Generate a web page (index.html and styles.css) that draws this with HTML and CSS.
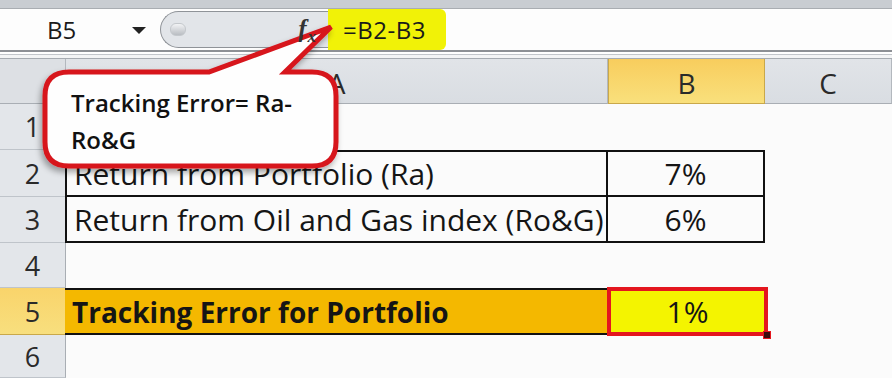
FILE: index.html
```html
<!DOCTYPE html>
<html lang="en">
<head>
    <meta charset="UTF-8">
    <title>Tracking Error - Excel</title>
    <link rel="stylesheet" href="styles.css">
</head>
<body>
    <div class="window">
        <div class="top-strip"></div>

        <div class="formula-bar">
            <div class="name-box">
                <span class="name-text">B5</span>
                <span class="drop-arrow"></span>
            </div>
            <div class="pill">
                <span class="pill-knob"></span>
                <span class="fx">f<span class="fx-x">x</span></span>
            </div>
            <div class="formula">=B2-B3</div>
            <div class="formula-rest"></div>
        </div>

        <div class="bar-gap"></div>

        <div class="sheet">
            <div class="corner"><span class="corner-tri"></span></div>
            <div class="col-head">A</div>
            <div class="col-head col-active">B</div>
            <div class="col-head">C</div>

            <div class="row-head">1</div>
            <div class="cell"></div>
            <div class="cell"></div>
            <div class="cell"></div>

            <div class="row-head">2</div>
            <div class="cell boxed boxed-left boxed-top">Return from Portfolio (Ra)</div>
            <div class="cell boxed boxed-top num">7%</div>
            <div class="cell"></div>

            <div class="row-head">3</div>
            <div class="cell boxed boxed-left">Return from Oil and Gas index (Ro&amp;G)</div>
            <div class="cell boxed num">6%</div>
            <div class="cell"></div>

            <div class="row-head">4</div>
            <div class="cell"></div>
            <div class="cell"></div>
            <div class="cell"></div>

            <div class="row-head row-active">5</div>
            <div class="cell result-label">Tracking Error for Portfolio</div>
            <div class="cell result-value num">1%<span class="fill-handle"></span></div>
            <div class="cell"></div>

            <div class="row-head">6</div>
            <div class="cell"></div>
            <div class="cell"></div>
            <div class="cell"></div>
        </div>

        <!-- callout over the sheet -->
        <svg class="callout-shape" width="892" height="378" viewBox="0 0 892 378">
            <defs>
                <filter id="shadow" x="-10%" y="-10%" width="130%" height="140%">
                    <feGaussianBlur in="SourceAlpha" stdDeviation="3"/>
                    <feOffset dx="-2" dy="4"/>
                    <feComponentTransfer><feFuncA type="linear" slope="0.35"/></feComponentTransfer>
                    <feMerge><feMergeNode/><feMergeNode in="SourceGraphic"/></feMerge>
                </filter>
            </defs>
            <path d="M69 72 L209 72 L331 27 L285 72 L312 72 Q336 72 336 96 L336 142 Q336 166 312 166 L69 166 Q45 166 45 142 L45 96 Q45 72 69 72 Z"
                  fill="#fefefe" stroke="#d7141d" stroke-width="5" stroke-linejoin="miter" filter="url(#shadow)"/>
        </svg>
        <div class="callout-text">Tracking Error= Ra-<br>Ro&amp;G</div>
    </div>
</body>
</html>
```

FILE: styles.css
```css
body {
    margin: 0;
    background: #fbfbfb;
    font-family: "Open Sans", "Liberation Sans", sans-serif;
    color: #1a1a1a;
}
.window {
    position: relative;
    width: 892px;
    height: 378px;
    overflow: hidden;
    background: #fbfbfb;
}
.top-strip {
    height: 8px;
    background: #c9cdd2;
    border-bottom: 1px solid #a9adb2;
}
.formula-bar {
    display: flex;
    height: 41px;
    background: #fdfdfd;
    border-bottom: 2px solid #8d9095;
}
.name-box {
    width: 160px;
    display: flex;
    align-items: center;
    padding-left: 47px;
    box-sizing: border-box;
}
.name-text {
    font-size: 24px;
    width: 85px;
}
.drop-arrow {
    width: 0;
    height: 0;
    border-left: 7px solid transparent;
    border-right: 7px solid transparent;
    border-top: 7px solid #222;
    margin-top: 2px;
}
.pill {
    width: 168px;
    margin: 2px 0;
    background: #e2e5e9;
    border: 1px solid #8f9398;
    border-right: none;
    border-radius: 20px 0 0 20px;
    display: flex;
    align-items: center;
    justify-content: space-between;
    padding: 0 12px 0 9px;
    box-sizing: border-box;
}
.pill-knob {
    width: 14px;
    height: 11px;
    border-radius: 6px;
    background: linear-gradient(#f2f3f5, #b9bdc2);
    border: 1px solid #c4c8cc;
}
.fx {
    position: relative;
    z-index: 2;
    font-family: "Liberation Serif", serif;
    font-style: italic;
    font-weight: bold;
    font-size: 25px;
    line-height: 24px;
    color: #333;
    display: flex;
    align-items: flex-end;
    margin-top: -2px;
}
.fx-x {
    font-size: 17px;
    line-height: 15px;
    margin-bottom: -3px;
    margin-left: 1px;
}
.formula {
    width: 118px;
    background: #f1f207;
    border-radius: 0 6px 6px 0;
    font-size: 24px;
    letter-spacing: 0.5px;
    display: flex;
    align-items: center;
    padding-left: 15px;
    box-sizing: border-box;
}
.formula-rest {
    flex: 1;
}
.bar-gap {
    height: 6px;
    background: #f3f4f5;
    border-bottom: 1px solid #a6abb1;
    box-shadow: inset 0 2px 0 #ffffff, inset 0 3px 0 #c2c6cb;
}
.sheet {
    display: grid;
    grid-template-columns: 66px 542px 157px 127px;
    grid-template-rows: 45px 46px 47px 46px 45px 47px 43px;
}
.corner {
    position: relative;
    background: #dde0e4;
    border-right: 1px solid #b3b8be;
    border-bottom: 1px solid #a9aeb4;
}
.corner-tri {
    position: absolute;
    right: 4px;
    bottom: 4px;
    width: 0;
    height: 0;
    border-left: 14px solid transparent;
    border-bottom: 14px solid #b9bdc2;
}
.col-head {
    background: linear-gradient(#e1e4e8, #d9dde2);
    border-right: 1px solid #b3b8be;
    border-bottom: 1px solid #a9aeb4;
    display: flex;
    align-items: center;
    justify-content: center;
    font-size: 28px;
    color: #2a2a2a;
    padding-top: 4px;
}
.col-active {
    background: linear-gradient(#f8cd5d, #f9e07c);
    border-left: 1px solid #c9a84a;
    border-right: 1px solid #c9a84a;
    border-bottom: 1px solid #c9a84a;
}
.row-head {
    background: #e3e6ea;
    border-right: 1px solid #a9aeb4;
    border-bottom: 1px solid #bfc4ca;
    display: flex;
    align-items: center;
    justify-content: center;
    font-size: 27px;
    color: #2a2a2a;
}
.row-active {
    background: linear-gradient(#f9d46b, #f8df7e);
    border-bottom-color: #c9a84a;
}
.cell {
    display: flex;
    align-items: center;
    font-size: 30px;
    padding-left: 7px;
    box-sizing: border-box;
    color: #151515;
    white-space: nowrap;
}
.num {
    justify-content: center;
    padding-left: 0;
}
.boxed {
    border-right: 2px solid #111;
    border-bottom: 2px solid #111;
}
.boxed-left {
    border-left: 2px solid #111;
    margin-left: -1px;
}
.boxed-top {
    border-top: 2px solid #111;
}
.result-label {
    background: #f4b800;
    border-top: 2px solid #111;
    border-bottom: 2px solid #111;
    font-weight: bold;
    font-size: 28px;
    margin-left: -1px;
}
.result-value {
    position: relative;
    background: #f4f400;
    border: 4px solid #e4161e;
    margin: -1px -3px -1px -1px;
}
.fill-handle {
    position: absolute;
    right: -7px;
    bottom: -7px;
    width: 6px;
    height: 6px;
    background: #3a0c0c;
    border: 1px solid #e4161e;
}
.callout-shape {
    position: absolute;
    left: 0;
    top: 0;
}
.callout-text {
    position: absolute;
    left: 71px;
    top: 84px;
    font-family: "Open Sans", "Liberation Sans", sans-serif;
    font-weight: 600;
    font-size: 24px;
    line-height: 37px;
    color: #111;
}
```
